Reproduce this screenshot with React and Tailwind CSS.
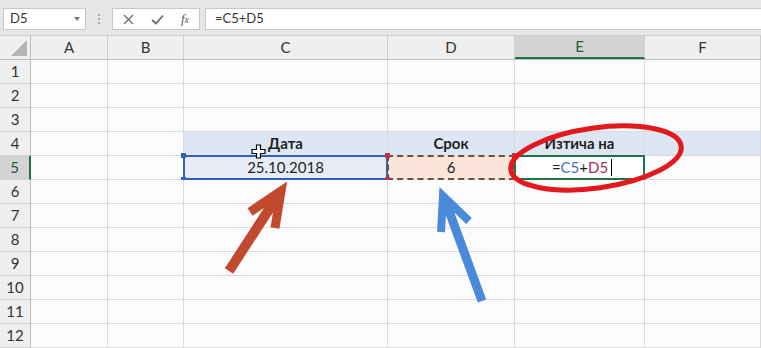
import React from "react";

const cols = [
  { id: "A", w: "w-[77px]" },
  { id: "B", w: "w-[76px]" },
  { id: "C", w: "w-[204px]" },
  { id: "D", w: "w-[127px]" },
  { id: "E", w: "w-[130px]" },
  { id: "F", w: "flex-1" },
];

const rows = [1, 2, 3, 4, 5, 6, 7, 8, 9, 10, 11, 12];

function Handle({ className }) {
  return <span className={"absolute w-[5px] h-[5px] " + className} />;
}

function CellContent({ col, row }) {
  if (row === 4 && col === "C") return <span className="font-bold">Дата</span>;
  if (row === 4 && col === "D") return <span className="font-bold">Срок</span>;
  if (row === 4 && col === "E") return <span className="font-bold">Изтича на</span>;
  if (row === 5 && col === "C") return <span>25.10.2018</span>;
  if (row === 5 && col === "D") return <span>6</span>;
  if (row === 5 && col === "E")
    return (
      <span className="flex items-center pl-[5px]">
        =<span className="text-[#3f72c8]">C5</span>+<span className="text-[#a3304e]">D5</span>
        <span className="ml-[3px] w-px h-[17px] bg-black" />
      </span>
    );
  return null;
}

function Cell({ col, row }) {
  let bg = "bg-[#fcfcfc]";
  if (row === 4 && ["C", "D", "E", "F"].includes(col.id)) bg = "bg-[#dde7f3]";
  if (row === 5 && col.id === "C") bg = "bg-[#e6ebf6]";
  if (row === 5 && col.id === "D") bg = "bg-[#fbe4da]";
  if (row === 5 && col.id === "E") bg = "bg-white";

  return (
    <div
      className={
        "relative h-full border-r border-b border-[#dadada] flex items-center justify-center text-[15px] text-[#1f1f1f] " +
        col.w +
        " " +
        bg
      }
    >
      <CellContent col={col.id} row={row} />
      {row === 5 && col.id === "C" && (
        <>
          <div className="absolute -left-px -top-px -right-px -bottom-px border-2 border-[#3061b8]" />
          <Handle className="-left-[3px] -top-[3px] bg-[#3061b8]" />
          <Handle className="-left-[3px] -bottom-[3px] bg-[#3061b8]" />
        </>
      )}
      {row === 5 && col.id === "D" && (
        <>
          <div className="absolute -left-px -top-px -right-px -bottom-px border-2 border-dashed border-[#6b5040]" />
          <Handle className="-left-[3px] -top-[3px] bg-[#c0304a]" />
          <Handle className="-left-[3px] -bottom-[3px] bg-[#c0304a]" />
          <Handle className="-right-[3px] -top-[3px] bg-[#c0304a]" />
          <Handle className="-right-[3px] -bottom-[3px] bg-[#c0304a]" />
        </>
      )}
      {row === 5 && col.id === "E" && (
        <>
          <div className="absolute -left-px -top-px -right-px -bottom-px border-2 border-[#217346]" />
          <Handle className="-right-[3px] -bottom-[3px] bg-[#217346] border border-white" />
        </>
      )}
    </div>
  );
}

export default function App() {
  return (
    <div className="relative w-[761px] h-[348px] overflow-hidden bg-[#fcfcfc] font-['Lato','Liberation_Sans',sans-serif] select-none">
      {/* formula bar */}
      <div className="h-[36px] bg-[#e6e6e6] flex items-start pt-[8px] pl-[3px] border-b border-[#d0d0d0]">
        <div className="w-[83px] h-[22px] bg-white border border-[#c8c8c8] flex items-center justify-between pl-[6px] pr-[5px] text-[13px] text-[#333]">
          <span>D5</span>
          <span className="w-0 h-0 border-l-[3px] border-r-[3px] border-t-[4px] border-l-transparent border-r-transparent border-t-[#777]" />
        </div>
        <div className="w-[26px] h-[22px] flex flex-col items-center justify-center gap-[2px]">
          <span className="w-[2px] h-[2px] bg-[#aaa]" />
          <span className="w-[2px] h-[2px] bg-[#aaa]" />
          <span className="w-[2px] h-[2px] bg-[#aaa]" />
        </div>
        <div className="w-[88px] h-[22px] bg-white border border-[#c8c8c8] flex items-center justify-between px-[10px] text-[#666]">
          <svg width="11" height="11" viewBox="0 0 11 11">
            <path d="M1 1 L10 10 M10 1 L1 10" stroke="#6b6b6b" strokeWidth="1.3" />
          </svg>
          <svg width="13" height="11" viewBox="0 0 13 11">
            <path d="M1 6 L5 9.5 L12 1.5" stroke="#6b6b6b" strokeWidth="1.8" fill="none" />
          </svg>
          <span className="font-['Liberation_Serif',serif] italic text-[13px] text-[#555]">
            f<span className="text-[10px]">x</span>
          </span>
        </div>
        <div className="ml-[5px] flex-1 h-[22px] bg-white border-y border-l border-[#c8c8c8] flex items-center pl-[9px] text-[13px] text-[#333]">
          =C5+D5
        </div>
      </div>

      {/* column header */}
      <div className="flex h-[24px] bg-[#efefef] border-b border-[#bdbdbd]">
        <div className="relative w-[31px] h-full border-r border-[#bdbdbd]">
          <svg className="absolute right-[3px] bottom-[3px]" width="16" height="16" viewBox="0 0 16 16">
            <path d="M16 0 L16 16 L0 16 Z" fill="#b5b5b5" />
          </svg>
        </div>
        {cols.map((c) => (
          <div
            key={c.id}
            className={
              "h-full flex items-center justify-center text-[15px] border-r border-[#d0d0d0] " +
              c.w +
              (c.id === "E"
                ? " bg-[#d3d3d3] border-b-2 border-b-[#217346] text-[#1e5e3a]"
                : " text-[#333]")
            }
          >
            {c.id}
          </div>
        ))}
      </div>

      {/* rows */}
      {rows.map((r) => (
        <div key={r} className="flex h-[24px]">
          <div
            className={
              "w-[31px] h-full flex items-center justify-center text-[15px] border-b border-[#d3d3d3] " +
              (r === 5
                ? "bg-[#d3d3d3] border-r-2 border-r-[#217346] text-[#1e5e3a]"
                : "bg-[#efefef] border-r border-r-[#bdbdbd] text-[#333]")
            }
          >
            {r}
          </div>
          {cols.map((c) => (
            <Cell key={c.id} col={c} row={r} />
          ))}
        </div>
      ))}

      {/* move cursor */}
      <svg className="absolute left-[251px] top-[144px]" width="15" height="15" viewBox="0 0 15 15">
        <path
          d="M5.5 1 H9.5 V5.5 H14 V9.5 H9.5 V14 H5.5 V9.5 H1 V5.5 H5.5 Z"
          fill="white"
          stroke="black"
          strokeWidth="1.2"
        />
      </svg>

      {/* annotations */}
      <svg className="absolute left-0 top-0 pointer-events-none" width="761" height="348" viewBox="0 0 761 348">
        <ellipse
          cx="596"
          cy="158"
          rx="86"
          ry="30"
          transform="rotate(-8 596 158)"
          fill="none"
          stroke="#e4181f"
          strokeWidth="5"
        />
        <line x1="229" y1="271" x2="279" y2="194" stroke="#c14a2e" strokeWidth="10" />
        <polyline points="250,212 281,191 275,228" fill="none" stroke="#c14a2e" strokeWidth="9" />
        <line x1="482" y1="301" x2="445" y2="200" stroke="#4a8ad9" strokeWidth="9" />
        <polyline points="441,232 443,196 469,221" fill="none" stroke="#4a8ad9" strokeWidth="8" />
      </svg>
    </div>
  );
}
